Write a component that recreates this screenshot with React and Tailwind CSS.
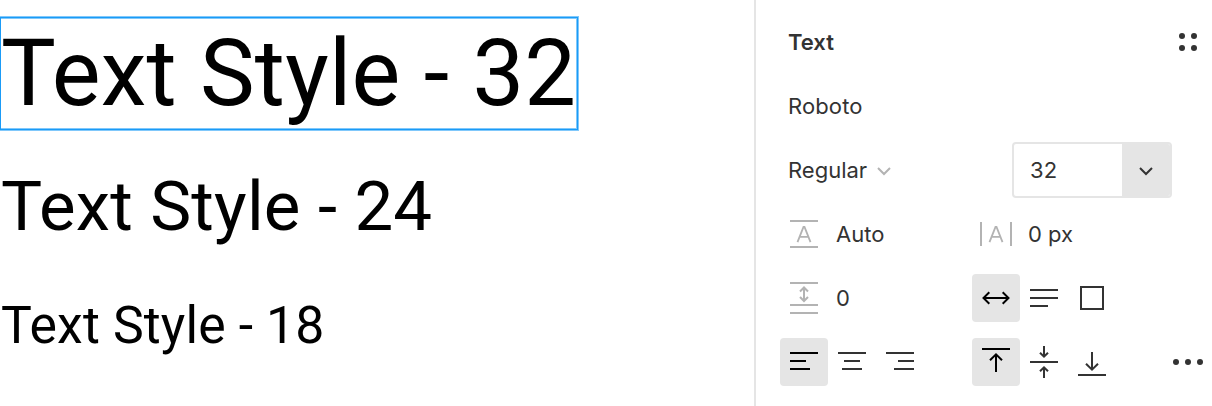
const INK = "#333333";
const MUTED = "#b3b3b3";

function Icon({ color = INK, children }) {
  return (
    <svg className="block size-12 shrink-0" viewBox="0 0 48 48" fill="none" stroke={color} strokeWidth="2">
      {children}
    </svg>
  );
}

function Toggle({ active, label, children }) {
  return (
    <button aria-label={label} className={active ? "size-12 shrink-0 rounded bg-[#e5e5e5]" : "size-12 shrink-0 rounded"}>
      <Icon color={active ? "#000000" : INK}>{children}</Icon>
    </button>
  );
}

function Row({ children }) {
  return <div className="flex h-16 items-center">{children}</div>;
}

function Canvas() {
  return (
    <main className="flex h-full w-[754px] shrink-0 flex-col items-start font-[Roboto,sans-serif] whitespace-nowrap text-black">
      <div className="mt-[17px] h-[113px] w-[578px] border border-[#1a9bf7] pt-[2px] text-[92px] leading-[108px] tracking-[0.24px] shadow-[0_0_0_1px_#80c8fb,inset_-1px_1px_0_0_#80c8fb,inset_-1px_-1px_0_0_#80c8fb]">
        Text Style - 32
      </div>
      <div className="mt-[36px] pl-px text-[69px] leading-[81px] tracking-[0.17px]">Text Style - 24</div>
      <div className="mt-[48px] pl-px text-[51.75px] leading-[61px] tracking-[0.13px]">Text Style - 18</div>
    </main>
  );
}

function Panel() {
  return (
    <aside className="h-full flex-1 border-l-2 border-[#e5e5e5] pt-[10px] pl-6 font-[Inter,sans-serif] text-[22px] leading-8 text-[#333333]">
      <Row>
        <h2 className="w-96 pl-2 font-semibold">Text</h2>
        <Icon>
          <g fill={INK} stroke="none">
            <circle cx="18" cy="18" r="3" />
            <circle cx="30" cy="18" r="3" />
            <circle cx="18" cy="30" r="3" />
            <circle cx="30" cy="30" r="3" />
          </g>
        </Icon>
      </Row>
      <Row>
        <span className="pl-2 tracking-[0.12px]">Roboto</span>
      </Row>
      <Row>
        <div className="flex w-[232px] items-center pl-2">
          <span>Regular</span>
          <svg className="ml-[9px] h-4 w-4" viewBox="0 0 16 16" fill="none" stroke={MUTED} strokeWidth="2">
            <path d="M2 6l6 6 6-6" />
          </svg>
        </div>
        <div className="flex h-14 w-40 overflow-hidden rounded border-2 border-[#e5e5e5]">
          <span className="flex w-[108px] items-center pl-4 tracking-[0.2px]">32</span>
          <span className="flex flex-1 items-center justify-center bg-[#e5e5e5]">
            <svg className="h-4 w-4" viewBox="0 0 16 16" fill="none" stroke={INK} strokeWidth="2">
              <path d="M2 6l6 6 6-6" />
            </svg>
          </span>
        </div>
      </Row>
      <Row>
        <div className="flex w-48 items-center">
          <Icon color={MUTED}>
            <path d="M10 11h28M10 37h28" />
            <path d="M17.5 32.2L23.5 16.8h1L30.5 32.2M19.5 26.8h9" strokeWidth="1.8" />
          </Icon>
          <span className="pl-2">Auto</span>
        </div>
        <Icon color={MUTED}>
          <path d="M9 12v24M39 12v24" />
          <path d="M17.5 32.2L23.5 16.8h1L30.5 32.2M19.5 26.8h9" strokeWidth="1.8" />
        </Icon>
        <span className="pl-2">0 px</span>
      </Row>
      <Row>
        <div className="flex w-48 items-center">
          <Icon color={MUTED}>
            <path d="M10 9h28M10 31h28M10 39h28M24 14v13M20 17.5l4-4 4 4M20 23l4 4 4-4" />
          </Icon>
          <span className="pl-2">0</span>
        </div>
        <Toggle active label="Auto width">
          <path d="M12 24h24M17.3 18.2l-5.8 5.8 5.8 5.8M30.7 18.2l5.8 5.8-5.8 5.8" />
        </Toggle>
        <Toggle label="Auto height">
          <path d="M10 16h28M10 24h28M10 32h18" />
        </Toggle>
        <Toggle label="Fixed size">
          <rect x="13" y="13" width="22" height="22" />
        </Toggle>
      </Row>
      <Row>
        <div className="flex w-48">
          <Toggle active label="Align left">
            <path d="M10 15h28M10 23h16M10 31h20" />
          </Toggle>
          <Toggle label="Align center">
            <path d="M10 15h28M16 23h16M14 31h20" />
          </Toggle>
          <Toggle label="Align right">
            <path d="M10 15h28M22 23h16M18 31h20" />
          </Toggle>
        </div>
        <div className="flex w-48">
          <Toggle active label="Align top">
            <path d="M10 11h28M24 34V16.5M18 22.3l6-6 6 6" />
          </Toggle>
          <Toggle label="Align middle">
            <path d="M10 24h28M24 8v11M20 14.7l4 4 4-4M24 40V29M20 33.3l4-4 4 4" />
          </Toggle>
          <Toggle label="Align bottom">
            <path d="M10 37h28M24 14v17.5M18 25.7l6 6 6-6" />
          </Toggle>
        </div>
        <Icon>
          <g fill={INK} stroke="none">
            <circle cx="12" cy="24" r="3" />
            <circle cx="24" cy="24" r="3" />
            <circle cx="36" cy="24" r="3" />
          </g>
        </Icon>
      </Row>
    </aside>
  );
}

export default function App() {
  return (
    <div className="flex h-[406px] w-[1212px] overflow-hidden bg-white">
      <Canvas />
      <Panel />
    </div>
  );
}
